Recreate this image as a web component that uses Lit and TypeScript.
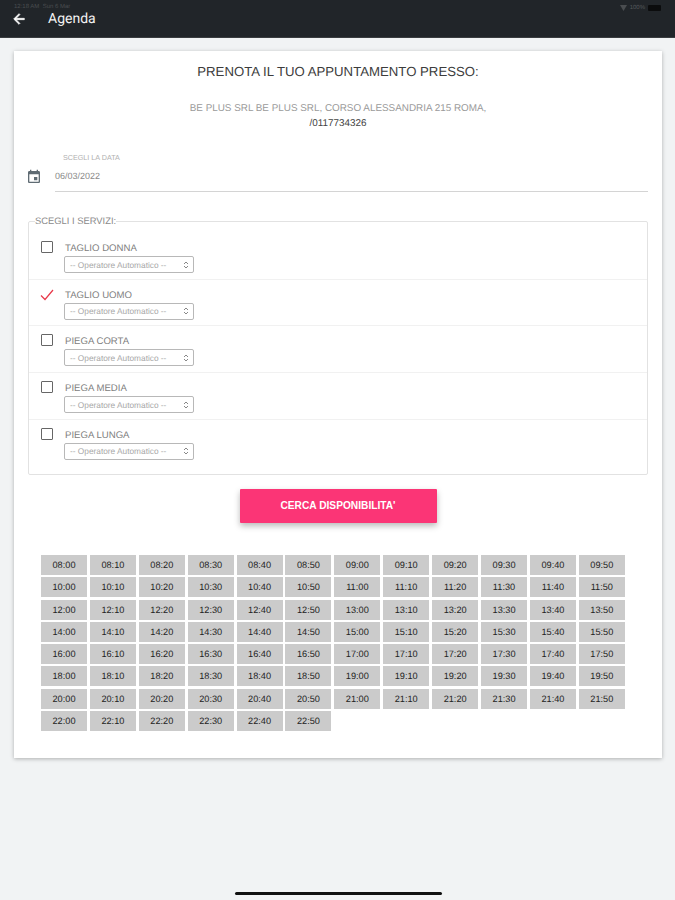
import { LitElement, html, css } from "lit";
import { customElement } from "lit/decorators.js";

const services = [
  { name: "TAGLIO DONNA", on: false },
  { name: "TAGLIO UOMO", on: true },
  { name: "PIEGA CORTA", on: false },
  { name: "PIEGA MEDIA", on: false },
  { name: "PIEGA LUNGA", on: false },
];

const slots: string[] = [];
for (let h = 8; h <= 22; h += 2) {
  for (const hour of [h, h + 1]) {
    if (hour > 22) continue;
    for (let m = 0; m < 60; m += 10) {
      slots.push(`${String(hour).padStart(2, "0")}:${String(m).padStart(2, "0")}`);
    }
  }
}

@customElement("app-root")
export class AppRoot extends LitElement {
  static styles = css`
    :host {
      display: block;
      width: 675px;
      height: 900px;
      background: #f1f3f4;
      font-family: "Liberation Sans", Arial, sans-serif;
      text-rendering: geometricPrecision;
      position: relative;
      overflow: hidden;
    }
    .bar {
      height: 37px;
      background: #212529;
      border-bottom: 1px solid #3a3d40;
      display: flex;
      align-items: center;
      padding: 0 13px 0 11px;
      color: #fff;
      position: relative;
    }
    .status {
      position: absolute;
      left: 14px;
      top: 4px;
      font-size: 6px;
      color: #4a4d50;
    }
    .back { width: 16px; height: 16px; display: block; }
    .title {
      margin-left: 21px;
      font-family: Roboto, sans-serif;
      font-size: 14px;
      color: #f2f2f2;
    }
    .right {
      position: absolute;
      right: 14px;
      top: 5px;
      display: flex;
      align-items: center;
      gap: 3px;
      font-size: 6px;
      color: #55585b;
    }
    .batt { width: 13px; height: 6px; background: #0b0c0d; border-radius: 1px; }
    .card {
      margin: 13px 13px 0 14px;
      height: 707px;
      box-sizing: border-box;
      background: #fff;
      box-shadow: 0 1px 4px rgba(0, 0, 0, 0.28);
      padding: 13px 14px 0;
    }
    h1 {
      margin: 0;
      text-align: center;
      font-size: 13.2px;
      line-height: 16px;
      font-weight: 400;
      color: #3c3c3c;
    }
    .addr {
      margin-top: 21px;
      text-align: center;
      font-size: 9.9px;
      line-height: 15px;
      color: #9a9a9a;
    }
    .addr b { display: block; font-weight: 400; color: #444; }
    .date {
      margin-top: 22px;
      display: flex;
      align-items: flex-start;
    }
    .cal { width: 16px; height: 16px; margin: 16px 1px 0 -2px; flex: none; }
    .field { margin-left: 12px; flex: 1; border-bottom: 1px solid #d4d4d4; height: 38px; }
    .lab { margin-left: 8px; font-size: 7.2px; line-height: 10px; color: #b0b0b0; }
    .val { margin-top: 8px; font-size: 9px; line-height: 10px; color: #8a8a8a; }
    fieldset {
      margin: 24px 0 0;
      padding: 7px 0 0;
      height: 259px;
      box-sizing: border-box;
      border: 1px solid #e2e2e2;
      border-radius: 2px;
    }
    legend {
      margin-left: 6px;
      padding: 0;
      font-size: 9.4px;
      line-height: 10px;
      color: #8a8a8a;
    }
    .svc {
      height: 46.7px;
      box-sizing: border-box;
      border-bottom: 1px solid #f1f1f1;
      display: flex;
      padding: 7px 0 0 12px;
    }
    .svc:last-child { border-bottom: none; }
    .box {
      width: 12px;
      height: 12px;
      border: 1.5px solid #666;
      box-sizing: border-box;
      border-radius: 1px;
      margin-top: 1px;
      flex: none;
    }
    .tick { width: 14px; height: 12px; margin: 2px -1px 0 -1px; flex: none; }
    .info { margin-left: 12px; }
    .name { font-size: 9.6px; line-height: 12px; color: #808080; margin-top: 3px; }
    .sel {
      margin-top: 1px;
      margin-left: -1px;
      width: 130px;
      height: 17px;
      box-sizing: border-box;
      border: 1px solid #b8b8b8;
      border-radius: 2px;
      display: flex;
      align-items: center;
      justify-content: space-between;
      padding: 0 4px 0 5px;
      font-size: 8.3px;
      color: #a8a8a8;
    }
    .chev { width: 6px; height: 8px; display: block; }
    .cta {
      display: block;
      margin: 14px auto 0;
      width: 197px;
      height: 34px;
      border: none;
      border-radius: 1px;
      background: #fb3576;
      color: #fff;
      font: 700 10.2px "Liberation Sans", Arial, sans-serif;
      box-shadow: 0 3px 6px rgba(0, 0, 0, 0.28);
      padding: 0 0 1px;
    }
    .slots {
      margin: 32px 0 0 13px;
      display: grid;
      grid-template-columns: repeat(12, 46px);
      column-gap: 2.9px;
      row-gap: 2.3px;
    }
    .slot {
      height: 20px;
      background: #cbcbcb;
      display: flex;
      align-items: center;
      justify-content: center;
      font-size: 9.2px;
      color: #222;
    }
    .home {
      position: absolute;
      left: 235px;
      top: 892px;
      width: 207px;
      height: 3px;
      border-radius: 2px;
      background: #111;
    }
  `;

  render() {
    return html`
      <div class="bar">
        <span class="status">12:18 AM &nbsp;Sun 6 Mar</span>
        <svg class="back" viewBox="0 0 24 24" fill="#fff" stroke="#fff" stroke-width="1"><path d="M20 11H7.83l5.59-5.59L12 4l-8 8 8 8 1.41-1.41L7.83 13H20z"/></svg>
        <span class="title">Agenda</span>
        <div class="right">
          <svg width="7" height="6" viewBox="0 0 7 6" fill="#4a4d50"><path d="M0 0h7L3.5 6z"/></svg>
          <span>100%</span>
          <span class="batt"></span>
        </div>
      </div>
      <main class="card">
        <h1>PRENOTA IL TUO APPUNTAMENTO PRESSO:</h1>
        <div class="addr">
          BE PLUS SRL BE PLUS SRL, CORSO ALESSANDRIA 215 ROMA,
          <b>/0117734326</b>
        </div>
        <div class="date">
          <svg class="cal" viewBox="0 0 24 24" fill="#5f6b73"><path d="M17 12h-5v5h5v-5zM16 1v2H8V1H6v2H5c-1.11 0-1.99.9-1.99 2L3 19c0 1.1.89 2 2 2h14c1.1 0 2-.9 2-2V5c0-1.1-.9-2-2-2h-1V1h-2zm3 18H5V8h14v11z"/></svg>
          <div class="field">
            <div class="lab">SCEGLI LA DATA</div>
            <div class="val">06/03/2022</div>
          </div>
        </div>
        <fieldset>
          <legend>SCEGLI I SERVIZI:</legend>
          ${services.map(
            (s) => html`
              <div class="svc">
                ${s.on
                  ? html`<svg class="tick" viewBox="0 0 14 12" fill="none" stroke="#e8394a" stroke-width="1.2"><path d="M1 6.5l4 4L13 1"/></svg>`
                  : html`<span class="box"></span>`}
                <div class="info">
                  <div class="name">${s.name}</div>
                  <div class="sel">
                    <span>-- Operatore Automatico --</span>
                    <svg class="chev" viewBox="0 0 6 8" fill="none" stroke="#888" stroke-width="1"><path d="M1 3l2-2 2 2M1 5l2 2 2-2"/></svg>
                  </div>
                </div>
              </div>
            `
          )}
        </fieldset>
        <button class="cta">CERCA DISPONIBILITA'</button>
        <div class="slots">
          ${slots.map((t) => html`<div class="slot">${t}</div>`)}
        </div>
      </main>
      <div class="home"></div>
    `;
  }
}
